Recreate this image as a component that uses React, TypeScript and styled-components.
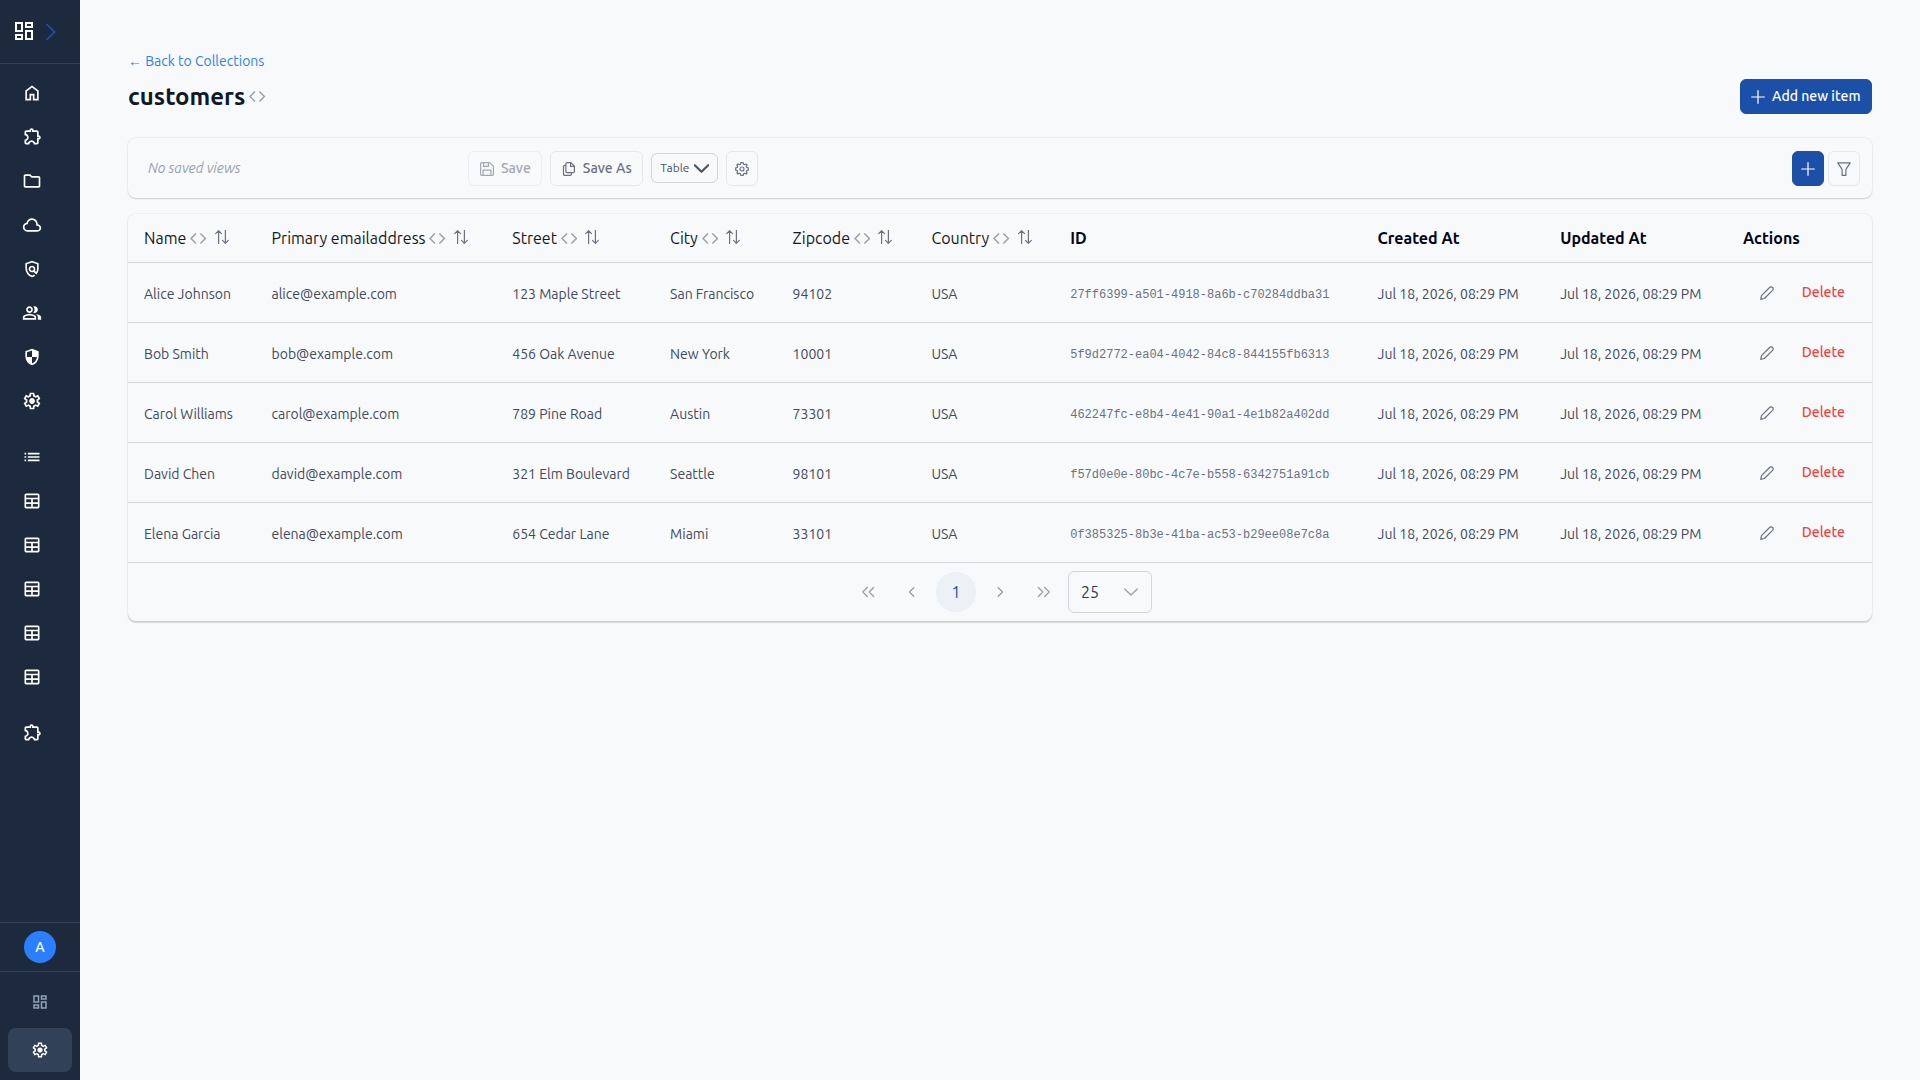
import React from "react";
import styled, { createGlobalStyle, css } from "styled-components";

const GlobalStyle = createGlobalStyle`
  *, *::before, *::after { box-sizing: border-box; }
  body {
    margin: 0;
    background: #f7f9fb;
    font-family: Ubuntu, "Noto Sans", sans-serif;
    font-size: 16px;
    line-height: 24px;
    color: #101828;
  }
  button { font-family: inherit; margin: 0; cursor: pointer; }
`;

/* ---------- icons ---------- */

const symbols = {
  dashboard:
    "M520-600v-240h320v240H520ZM120-440v-400h320v400H120Zm400 320v-400h320v400H520Zm-400 0v-240h320v240H120Zm80-400h160v-240H200v240Zm400 320h160v-240H600v240Zm0-480h160v-80H600v80ZM200-200h160v-80H200v80Z",
  home: "M240-200h120v-240h240v240h120v-360L480-740 240-560v360Zm-80 80v-480l320-240 320 240v480H520v-240h-80v240H160Z",
  extension:
    "M352-120H200q-33 0-56.5-23.5T120-200v-152q48 0 84-30.5t36-77.5q0-47-36-77.5T120-568v-152q0-33 23.5-56.5T200-800h160q0-42 29-71t71-29q42 0 71 29t29 71h160q33 0 56.5 23.5T800-720v160q42 0 71 29t29 71q0 42-29 71t-71 29v160q0 33-23.5 56.5T720-120H568q0-50-31.5-85T460-240q-45 0-76.5 35T352-120Zm-152-80h85q24-66 77-93t98-27q45 0 98 27t77 93h85v-240h80q8 0 14-6t6-14q0-8-6-14t-14-6h-80v-240H480v-80q0-8-6-14t-14-6q-8 0-14 6t-6 14v80H200v88q54 20 87 67t33 105q0 57-33 104t-87 68v88Z",
  folder:
    "M160-160q-33 0-56.5-23.5T80-240v-480q0-33 23.5-56.5T160-800h240l80 80h320q33 0 56.5 23.5T880-640v400q0 33-23.5 56.5T800-160H160Zm0-80h640v-400H447l-80-80H160v480Z",
  cloud:
    "M260-160q-91 0-155.5-63T40-377q0-78 47-139t123-78q25-92 100-149t170-57q117 0 198.5 81.5T760-520q69 8 114.5 59.5T920-340q0 75-52.5 127.5T740-160H260Zm0-80h480q42 0 71-29t29-71q0-42-29-71t-71-29h-60v-80q0-83-58.5-141.5T480-720q-83 0-141.5 58.5T280-520h-20q-58 0-99 41t-41 99q0 58 41 99t99 41Z",
  policy:
    "M480-80q-139-35-229.5-159.5T160-516v-244l320-120 320 120v244q0 85-29 163.5T688-214L560-342q-18 11-38.5 16.5T480-320q-66 0-113-47t-47-113q0-66 47-113t113-47q66 0 113 47t47 113q0 22-5.5 42.5T618-398l60 60q20-41 31-86t11-92v-189l-240-90-240 90v189q0 121 68 220t172 132q26-8 49.5-20.5T576-214l56 56q-33 27-71.5 47T480-80Zm0-320q33 0 56.5-23.5T560-480q0-33-23.5-56.5T480-560q-33 0-56.5 23.5T400-480q0 33 23.5 56.5T480-400Z",
  group:
    "M40-160v-112q0-34 17.5-62.5T104-378q62-31 126-46.5T360-440q66 0 130 15.5T616-378q29 15 46.5 43.5T680-272v112H40Zm720 0v-120q0-44-24.5-84.5T666-434q51 6 96 20.5t84 35.5q36 20 55 44.5t19 53.5v120H760ZM360-480q-66 0-113-47t-47-113q0-66 47-113t113-47q66 0 113 47t47 113q0 66-47 113t-113 47Zm400-160q0 66-47 113t-113 47q-11 0-28-2.5t-28-5.5q27-32 41.5-71t14.5-81q0-42-14.5-81T544-792q14-5 28-6.5t28-1.5q66 0 113 47t47 113ZM120-240h480v-32q0-11-5.5-20T580-306q-54-27-109-40.5T360-360q-56 0-111 13.5T140-306q-9 5-14.5 14t-5.5 20v32Zm240-320q33 0 56.5-23.5T440-640q0-33-23.5-56.5T360-720q-33 0-56.5 23.5T280-640q0 33 23.5 56.5T360-560Z",
  security:
    "M480-80q-139-35-229.5-159.5T160-516v-244l320-120 320 120v244q0 152-90.5 276.5T480-80Zm0-84q97-30 162-118.5T718-480H480v-315l-240 90v207q0 7 2 18h238v316Z",
  settings:
    "m370-80-16-128q-13-5-24.5-12T307-235l-119 50L78-375l103-78q-1-7-1-13.5v-27q0-6.5 1-13.5L78-585l110-190 119 50q11-8 23-15t24-12l16-128h220l16 128q13 5 24.5 12t22.5 15l119-50 110 190-103 78q1 7 1 13.5v27q0 6.5-2 13.5l103 78-110 190-118-50q-11 8-23 15t-24 12L590-80H370Zm70-80h79l14-106q31-8 57.5-23.5T639-327l99 41 39-68-86-65q5-14 7-29.5t2-31.5q0-16-2-31.5t-7-29.5l86-65-39-68-99 42q-22-23-48.5-38.5T533-694l-13-106h-79l-14 106q-31 8-57.5 23.5T321-633l-99-41-39 68 86 64q-5 15-7 30t-2 32q0 16 2 31t7 30l-86 65 39 68 99-42q22 23 48.5 38.5T427-266l13 106Zm42-180q58 0 99-41t41-99q0-58-41-99t-99-41q-59 0-99.5 41T342-480q0 58 40.5 99t99.5 41Z",
  list: "M280-600v-80h560v80H280Zm0 160v-80h560v80H280Zm0 160v-80h560v80H280ZM120-600v-80h80v80h-80Zm0 160v-80h80v80h-80Zm0 160v-80h80v80h-80Z",
  table:
    "M760-120H200q-33 0-56.5-23.5T120-200v-560q0-33 23.5-56.5T200-840h560q33 0 56.5 23.5T840-760v560q0 33-23.5 56.5T760-120ZM200-640h560v-120H200v120Zm0 220h240v-140H200v140Zm0 220h240v-140H200v140Zm320-220h240v-140H520v140Zm0 220h240v-140H520v140Z",
};
type SymbolName = keyof typeof symbols;

const Svg = styled.svg`
  display: block;
  flex: none;
`;

const Symbol = ({ name, size = 20 }: { name: SymbolName; size?: number }) => (
  <Svg width={size} height={size} viewBox="0 -960 960 960" fill="currentColor" fillRule="evenodd">
    <path d={symbols[name]} />
  </Svg>
);

const CodeIcon = () => (
  <Svg width="16.4" height="13" viewBox="0 0 16.4 13" fill="none" stroke="currentColor" strokeWidth="1.5">
    <path d="M6 1.5 1 6.5 6 11.5M10.4 1.5 15.4 6.5 10.4 11.5" />
  </Svg>
);

const glyphs = {
  plus: "M7 .7V13.3M.7 7H13.3",
  save: "M1.9 .6H9.6L13.4 4.2V12.1A1.3 1.3 0 0 1 12.1 13.4H1.9A1.3 1.3 0 0 1 .6 12.1V1.9A1.3 1.3 0 0 1 1.9 .6ZM3.6 .8V4.4H8.4V.8M3.1 13.2V8.2H10.9V13.2",
  copy: "M5 .6H8.9L12.4 4.1V9.6A1.1 1.1 0 0 1 11.3 10.7H5A1.1 1.1 0 0 1 3.9 9.6V1.7A1.1 1.1 0 0 1 5 .6ZM8.6 .8V4.4H12.2M3.9 3.3H2.6A1.1 1.1 0 0 0 1.5 4.4V12.3A1.1 1.1 0 0 0 2.6 13.4H8.2A1.1 1.1 0 0 0 9.3 12.3V10.9",
  sort: "M3.6 13.6V.8M.7 3.6 3.6 .7 6.5 3.6M10.4 .4V13.2M7.5 10.4 10.4 13.3 13.3 10.4",
  filter: "M.8 .8H13.2L8.9 7.3V13.3H5.1V7.3Z",
  pencil: "M.7 13.3 1.5 9.6 9.6 1.5A1.9 1.9 0 0 1 12.5 1.5A1.9 1.9 0 0 1 12.5 4.4L4.4 12.5Z",
  chevronDown: "M.7 3.9 7 10.1 13.3 3.9",
  chevronRight: "M2.7 .6 9.2 7 2.7 13.4",
  angleLeft: "M8.7 2.8 4.5 7 8.7 11.2",
  angleRight: "M5.3 2.8 9.5 7 5.3 11.2",
  anglesLeft: "M6.3 2.5 1.8 7 6.3 11.5M12.6 2.5 8.1 7 12.6 11.5",
  anglesRight: "M1.4 2.5 5.9 7 1.4 11.5M7.7 2.5 12.2 7 7.7 11.5",
  cog: "M5.8 .7H8.2L8.6 2.3 9.6 2.7 11 1.9 12.1 3 11.3 4.4 11.7 5.4 13.3 5.8V8.2L11.7 8.6 11.3 9.6 12.1 11 11 12.1 9.6 11.3 8.6 11.7 8.2 13.3H5.8L5.4 11.7 4.4 11.3 3 12.1 1.9 11 2.7 9.6 2.3 8.6 .7 8.2V5.8L2.3 5.4 2.7 4.4 1.9 3 3 1.9 4.4 2.7 5.4 2.3ZM9 7A2 2 0 1 1 5 7A2 2 0 1 1 9 7Z",
};

const Glyph = ({ name, size = 14, weight = 1.2 }: { name: keyof typeof glyphs; size?: number; weight?: number }) => (
  <Svg
    width={size}
    height={size}
    viewBox="0 0 14 14"
    fill="none"
    stroke="currentColor"
    strokeWidth={weight}
    strokeLinecap="round"
    strokeLinejoin="round"
  >
    <path d={glyphs[name]} />
  </Svg>
);

/* ---------- sidebar ---------- */

const Shell = styled.div`
  display: flex;
  height: 100vh;
  overflow: hidden;
`;

const Sidebar = styled.aside`
  width: 80px;
  flex: none;
  display: flex;
  flex-direction: column;
  background: #1d293d;
  color: #fff;
`;

const Brand = styled.div`
  display: flex;
  align-items: center;
  gap: 8px;
  height: 64px;
  padding: 0 12px 2px;
  border-bottom: 1px solid #314158;
`;

const Expand = styled.span`
  color: #1c50a8;
  padding-top: 3px;
`;

const Nav = styled.nav`
  flex: 1;
  padding: 8px;
  display: flex;
  flex-direction: column;
  gap: 12px;
`;

const NavLink = styled.a`
  display: flex;
  align-items: center;
  height: 44px;
  padding: 0 14px 1.2px;
  border-radius: 8px;
`;

const Account = styled.div`
  padding: 8px 24px;
  border-top: 1px solid #314158;
  border-bottom: 1px solid #314158;
`;

const Avatar = styled.div`
  display: grid;
  place-items: center;
  width: 32px;
  height: 32px;
  border-radius: 50%;
  background: #2b7fff;
  font-size: 14px;
  font-weight: 500;
  line-height: 20px;
`;

const Modes = styled.div`
  display: flex;
  flex-direction: column;
  gap: 4px;
  padding: 8px;
`;

const Mode = styled.button<{ $active?: boolean }>`
  display: grid;
  place-items: center;
  height: 44px;
  border: 0;
  border-radius: 8px;
  background: ${(p) => (p.$active ? "#314158" : "transparent")};
  color: ${(p) => (p.$active ? "#fff" : "#90a1b9")};
`;

/* ---------- page ---------- */

const Main = styled.main`
  flex: 1;
  padding: 48px;
`;

const BackLink = styled.a`
  display: block;
  width: max-content;
  padding-top: 3px;
  font-size: 14px;
  line-height: 20px;
  color: #3182ed;
`;

const TitleRow = styled.header`
  display: flex;
  align-items: center;
  justify-content: space-between;
  margin-top: 8px;
  height: 35px;
`;

const Title = styled.h1`
  display: flex;
  align-items: center;
  gap: 4px;
  margin: 0;
  font-size: 24px;
  line-height: 32px;
  font-weight: 700;
`;

const CodeMark = styled.span`
  color: #99a1af;
`;

const Card = styled.section`
  border-radius: 8px;
  box-shadow: 0 0 0 1px rgba(0, 0, 0, 0.03), 0 1px 0 rgba(0, 0, 0, 0.08), 0 1px 3px rgba(0, 0, 0, 0.08);
`;

const Button = styled.button<{ $primary?: boolean; $square?: boolean }>`
  display: flex;
  align-items: center;
  justify-content: center;
  gap: 7px;
  height: 35px;
  padding: 0 10.5px;
  border-radius: 6px;
  border: 1px solid #e5e7eb;
  background: transparent;
  color: #6a7282;
  font-size: 14px;
  line-height: 20px;
  font-weight: 500;
  ${(p) => p.$square && css`width: 32px; padding: 0;`}
  ${(p) => p.$primary && css`background: #1c50a8; border-color: #1c50a8; color: #fff;`}
  &:disabled { opacity: 0.6; }
`;

const Label = styled.span`
  padding-bottom: 2px;
`;

const Toolbar = styled(Card)`
  display: flex;
  align-items: center;
  height: 60px;
  margin-top: 24px;
  padding: 1px 12px 0 20px;
`;

const NoViews = styled.span`
  width: 320.4px;
  font-size: 14px;
  line-height: 20px;
  font-style: italic;
  color: #99a1af;
  padding-bottom: 1px;
`;

const ToolGroup = styled.div<{ $gap: number; $end?: boolean }>`
  display: flex;
  align-items: center;
  gap: ${(p) => p.$gap}px;
  margin-left: ${(p) => (p.$end ? "auto" : "0")};
`;

const ViewSelect = styled.div`
  display: flex;
  align-items: center;
  gap: 5px;
  height: 30px;
  width: 67px;
  margin-bottom: 1px;
  padding: 0 8px;
  border: 1px solid #d1d5dc;
  border-radius: 6px;
  font-size: 12px;
  line-height: 16px;
  color: #4a5565;
`;

/* ---------- table ---------- */

const TableCard = styled(Card)`
  margin-top: 16px;
  box-shadow: 0 0 0 1px rgba(0, 0, 0, 0.03), 0 2px 0 rgba(0, 0, 0, 0.1), 0 1px 3px rgba(0, 0, 0, 0.08);
`;

const Row = styled.div<{ $head?: boolean }>`
  display: grid;
  grid-template-columns: 127.5px 240.8px 157.8px 122.5px 138.8px 138.8px 307.4px 182.6px 182.8px 1fr;
  align-items: center;
  height: ${(p) => (p.$head ? 49 : 60)}px;
  border-bottom: 1px solid #d4d7dd;
`;

const HeadCell = styled.div<{ $strong?: boolean }>`
  display: flex;
  align-items: center;
  padding-left: 16px;
  white-space: nowrap;
  color: ${(p) => (p.$strong ? "#020617" : "#18181b")};
  font-weight: ${(p) => (p.$strong ? 600 : 400)};
`;

const HeadCode = styled(CodeMark)`
  margin: 0 8px 0 3.9px;
`;

const SortMark = styled.span`
  padding-bottom: 2px;
  color: #6a7282;
`;

const Cell = styled.div`
  padding: 2px 0 0 16px;
  font-size: 14px;
  line-height: 20px;
  white-space: nowrap;
  color: #414b5b;
`;

const IdCell = styled(Cell)`
  padding-top: 5px;
  font-family: "Liberation Mono", monospace;
  font-size: 12px;
  color: #6a7282;
`;

const Actions = styled.div`
  display: flex;
  align-items: center;
  padding-left: 32.8px;
  color: #6a7282;
`;

const Delete = styled.a`
  margin: 0 0 1px 28px;
  font-size: 14px;
  line-height: 20px;
  font-weight: 500;
  color: #ef4444;
`;

const Paginator = styled.div`
  display: flex;
  align-items: center;
  justify-content: center;
  gap: 4px;
  padding: 8px;
`;

const PageButton = styled.button<{ $current?: boolean }>`
  display: grid;
  place-items: center;
  width: 40px;
  height: 40px;
  padding: 0;
  border: 0;
  border-radius: 50%;
  font-size: 16px;
  background: ${(p) => (p.$current ? "#ebf1f4" : "transparent")};
  color: ${(p) => (p.$current ? "#1c50a8" : "#a1a1aa")};
`;

const PageSize = styled.div`
  display: flex;
  align-items: center;
  justify-content: space-between;
  width: 84px;
  height: 42px;
  padding: 0 13px 0 12px;
  border: 1px solid #d1d5dc;
  border-radius: 6px;
  color: #334155;
  svg { color: #a1a1aa; }
`;

const navGroups: SymbolName[][] = [
  ["home", "extension", "folder", "cloud", "policy", "group", "security", "settings"],
  ["list", "table", "table", "table", "table", "table"],
  ["extension"],
];

const fields = ["Name", "Primary emailaddress", "Street", "City", "Zipcode", "Country"];
const systemFields = ["ID", "Created At", "Updated At", "Actions"];
const stamp = "Jul 18, 2026, 08:29 PM";

const customers = [
  ["Alice Johnson", "alice@example.com", "123 Maple Street", "San Francisco", "94102", "27ff6399-a501-4918-8a6b-c70284ddba31"],
  ["Bob Smith", "bob@example.com", "456 Oak Avenue", "New York", "10001", "5f9d2772-ea04-4042-84c8-844155fb6313"],
  ["Carol Williams", "carol@example.com", "789 Pine Road", "Austin", "73301", "462247fc-e8b4-4e41-90a1-4e1b82a402dd"],
  ["David Chen", "david@example.com", "321 Elm Boulevard", "Seattle", "98101", "f57d0e0e-80bc-4c7e-b558-6342751a91cb"],
  ["Elena Garcia", "elena@example.com", "654 Cedar Lane", "Miami", "33101", "0f385325-8b3e-41ba-ac53-b29ee08e7c8a"],
];

export default function App() {
  return (
    <Shell>
      <GlobalStyle />
      <Sidebar>
        <Brand>
          <Symbol name="dashboard" size={24} />
          <Expand><Glyph name="chevronRight" size={16} weight={1.6} /></Expand>
        </Brand>
        <Nav>
          {navGroups.map((group, g) => (
            <div key={g}>
              {group.map((name, i) => (
                <NavLink key={i}><Symbol name={name} /></NavLink>
              ))}
            </div>
          ))}
        </Nav>
        <Account><Avatar>A</Avatar></Account>
        <Modes>
          <Mode><Symbol name="dashboard" size={18} /></Mode>
          <Mode $active><Symbol name="settings" size={18} /></Mode>
        </Modes>
      </Sidebar>

      <Main>
        <BackLink>← Back to Collections</BackLink>
        <TitleRow>
          <Title>
            customers
            <CodeMark><CodeIcon /></CodeMark>
          </Title>
          <Button $primary><Glyph name="plus" /><Label>Add new item</Label></Button>
        </TitleRow>

        <Toolbar>
          <NoViews>No saved views</NoViews>
          <ToolGroup $gap={8}>
            <Button disabled><Glyph name="save" /><Label>Save</Label></Button>
            <Button><Glyph name="copy" /><Label>Save As</Label></Button>
            <ViewSelect>Table<Glyph name="chevronDown" size={15} weight={2} /></ViewSelect>
            <Button $square><Glyph name="cog" /></Button>
          </ToolGroup>
          <ToolGroup $gap={4} $end>
            <Button $primary $square><Glyph name="plus" /></Button>
            <Button $square><Glyph name="filter" /></Button>
          </ToolGroup>
        </Toolbar>

        <TableCard>
          <Row $head>
            {fields.map((f) => (
              <HeadCell key={f}>
                {f}
                <HeadCode><CodeIcon /></HeadCode>
                <SortMark><Glyph name="sort" /></SortMark>
              </HeadCell>
            ))}
            {systemFields.map((f) => <HeadCell key={f} $strong>{f}</HeadCell>)}
          </Row>
          {customers.map(([name, email, street, city, zip, id]) => (
            <Row key={id}>
              {[name, email, street, city, zip, "USA"].map((v) => <Cell key={v}>{v}</Cell>)}
              <IdCell>{id}</IdCell>
              <Cell>{stamp}</Cell>
              <Cell>{stamp}</Cell>
              <Actions><Glyph name="pencil" /><Delete>Delete</Delete></Actions>
            </Row>
          ))}
          <Paginator>
            <PageButton><Glyph name="anglesLeft" weight={1.5} /></PageButton>
            <PageButton><Glyph name="angleLeft" weight={1.5} /></PageButton>
            <PageButton $current>1</PageButton>
            <PageButton><Glyph name="angleRight" weight={1.5} /></PageButton>
            <PageButton><Glyph name="anglesRight" weight={1.5} /></PageButton>
            <PageSize>25<Glyph name="chevronDown" weight={1.4} /></PageSize>
          </Paginator>
        </TableCard>
      </Main>
    </Shell>
  );
}
